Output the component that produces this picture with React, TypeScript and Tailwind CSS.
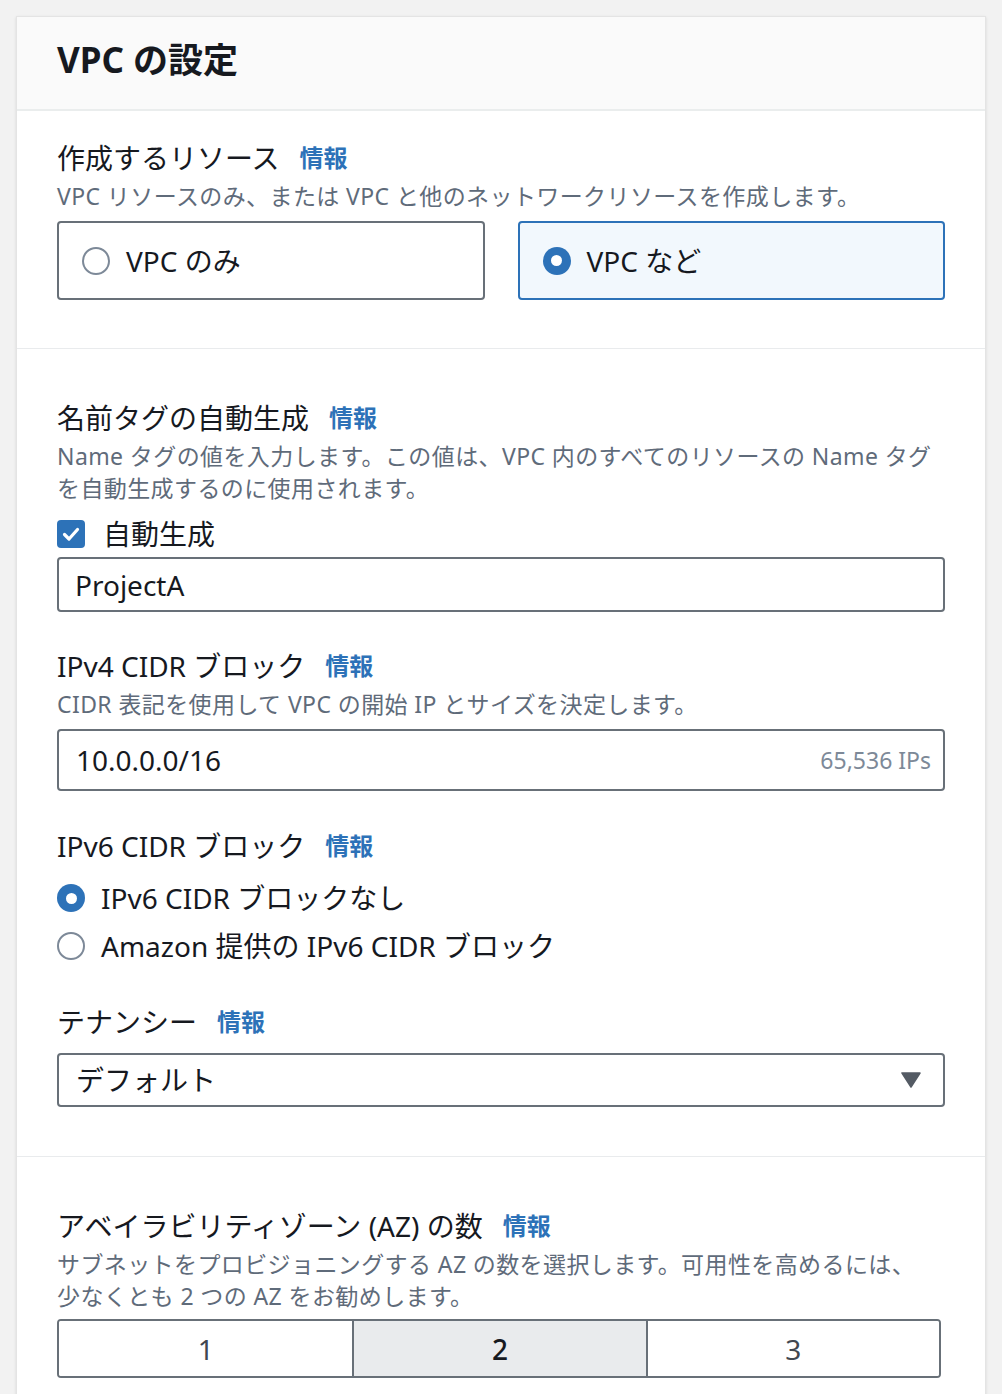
import React, { useState } from "react";

const FONT = {
  fontFamily: '"Noto Sans", "Noto Sans CJK JP", sans-serif',
};

function Info() {
  return (
    <a className="text-[24px] font-bold text-[#2d72b8] leading-[36px] cursor-pointer">
      情報
    </a>
  );
}

function FieldLabel({ text }: { text: string }) {
  return (
    <div className="flex items-center gap-[20px] h-[36px]">
      <span className="text-[28px] leading-[36px] text-[#16191f]">{text}</span>
      <Info />
    </div>
  );
}

function Desc({ children }: { children: React.ReactNode }) {
  return (
    <p className="mt-[4px] text-[23px] leading-[32px] tracking-[0.4px] text-[#5f6b7a]">
      {children}
    </p>
  );
}

function Radio({ checked }: { checked: boolean }) {
  return checked ? (
    <span className="w-[28px] h-[28px] rounded-full bg-[#2d72b8] flex items-center justify-center shrink-0">
      <span className="w-[11px] h-[11px] rounded-full bg-white" />
    </span>
  ) : (
    <span className="w-[28px] h-[28px] rounded-full border-2 border-[#7d8998] bg-white shrink-0" />
  );
}

export default function App() {
  const [resource, setResource] = useState("more");
  const [ipv6, setIpv6] = useState("none");
  const [auto, setAuto] = useState(true);
  const [az, setAz] = useState(2);

  return (
    <div className="min-h-[1394px] bg-[#f2f2f2] pt-[16px] pl-[16px] pr-[16px]" style={FONT}>
      <div className="bg-white border border-[#e4e4e4] shadow-sm">
        {/* Header */}
        <div className="h-[94px] bg-[#fafafa] border-b-2 border-[#eaeded] flex items-center px-[40px] pb-[8px]">
          <h1 className="text-[35px] font-bold text-[#16191f] leading-none">VPC の設定</h1>
        </div>

        {/* 作成するリソース */}
        <div className="px-[40px] pt-[29px] pb-[48px] border-b border-[#e9ebed]">
          <FieldLabel text="作成するリソース" />
          <Desc>VPC リソースのみ、または VPC と他のネットワークリソースを作成します。</Desc>
          <div className="mt-[9px] grid grid-cols-2 gap-[33px]">
            <button
              onClick={() => setResource("only")}
              className={`h-[79px] rounded-[4px] border-2 flex items-center gap-[16px] px-[23px] ${
                resource === "only" ? "border-[#2d72b8] bg-[#f2f8fd]" : "border-[#687078] bg-white"
              }`}
            >
              <Radio checked={resource === "only"} />
              <span className="text-[28px] text-[#16191f]">VPC のみ</span>
            </button>
            <button
              onClick={() => setResource("more")}
              className={`h-[79px] rounded-[4px] border-2 flex items-center gap-[16px] px-[23px] ${
                resource === "more" ? "border-[#2d72b8] bg-[#f2f8fd]" : "border-[#687078] bg-white"
              }`}
            >
              <Radio checked={resource === "more"} />
              <span className="text-[28px] text-[#16191f]">VPC など</span>
            </button>
          </div>
        </div>

        {/* 名前タグ〜テナンシー */}
        <div className="px-[40px] pt-[51px] pb-[49px] border-b border-[#e9ebed]">
          <FieldLabel text="名前タグの自動生成" />
          <Desc>
            Name タグの値を入力します。この値は、VPC 内のすべてのリソースの Name タグ
            <br />
            を自動生成するのに使用されます。
          </Desc>
          <label className="mt-[12px] flex items-center gap-[18px] h-[36px] cursor-pointer">
            <span
              onClick={() => setAuto(!auto)}
              className={`w-[28px] h-[28px] rounded-[4px] flex items-center justify-center ${
                auto ? "bg-[#2d72b8]" : "border-2 border-[#7d8998]"
              }`}
            >
              {auto && (
                <svg width="20" height="20" viewBox="0 0 20 20" fill="none">
                  <path d="M3.5 10.5l4.5 4.5 8.5-9.5" stroke="white" strokeWidth="3.2" strokeLinecap="round" strokeLinejoin="round" />
                </svg>
              )}
            </span>
            <span className="text-[28px] text-[#16191f]">自動生成</span>
          </label>
          <div className="mt-[5px] h-[55px] rounded-[4px] border-2 border-[#687078] flex items-center px-[16px]">
            <span className="text-[28px] text-[#16191f]">ProjectA</span>
          </div>

          <div className="mt-[36px]">
            <FieldLabel text="IPv4 CIDR ブロック" />
            <Desc>CIDR 表記を使用して VPC の開始 IP とサイズを決定します。</Desc>
            <div className="mt-[9px] h-[62px] rounded-[4px] border-2 border-[#687078] flex items-center justify-between pl-[17px] pr-[12px]">
              <span className="text-[28px] text-[#16191f]">10.0.0.0/16</span>
              <span className="text-[23px] text-[#7d8998]">65,536 IPs</span>
            </div>
          </div>

          <div className="mt-[37px]">
            <FieldLabel text="IPv6 CIDR ブロック" />
            <div className="mt-[16px] flex flex-col gap-[12px]">
              <div className="flex items-center gap-[16px] h-[36px] cursor-pointer" onClick={() => setIpv6("none")}>
                <Radio checked={ipv6 === "none"} />
                <span className="text-[28px] text-[#16191f]">IPv6 CIDR ブロックなし</span>
              </div>
              <div className="flex items-center gap-[16px] h-[36px] cursor-pointer" onClick={() => setIpv6("amazon")}>
                <Radio checked={ipv6 === "amazon"} />
                <span className="text-[28px] text-[#16191f]">Amazon 提供の IPv6 CIDR ブロック</span>
              </div>
            </div>
          </div>

          <div className="mt-[40px]">
            <FieldLabel text="テナンシー" />
            <div className="mt-[13px] h-[54px] rounded-[4px] border-2 border-[#687078] flex items-center justify-between pl-[17px] pr-[22px]">
              <span className="text-[28px] text-[#16191f]">デフォルト</span>
              <svg width="20" height="16" viewBox="0 0 20 16">
                <path d="M1 1h18l-9 14z" fill="#545b64" stroke="#545b64" strokeWidth="1.5" strokeLinejoin="round" />
              </svg>
            </div>
          </div>
        </div>

        {/* AZ */}
        <div className="px-[40px] pt-[51px] pb-[40px]">
          <FieldLabel text="アベイラビリティゾーン (AZ) の数" />
          <Desc>
            サブネットをプロビジョニングする AZ の数を選択します。可用性を高めるには、
            <br />
            少なくとも 2 つの AZ をお勧めします。
          </Desc>
          <div className="mt-[7px] mr-[4px] h-[59px] rounded-[4px] border-2 border-[#687078] grid grid-cols-3 overflow-hidden">
            {[1, 2, 3].map((n) => (
              <button
                key={n}
                onClick={() => setAz(n)}
                className={`text-[28px] flex items-center justify-center ${n > 1 ? "border-l-2 border-[#687078]" : ""} ${
                  az === n ? "bg-[#e9ebed] text-[#16191f] font-medium" : "bg-white text-[#414750]"
                }`}
              >
                {n}
              </button>
            ))}
          </div>
        </div>
      </div>
    </div>
  );
}
